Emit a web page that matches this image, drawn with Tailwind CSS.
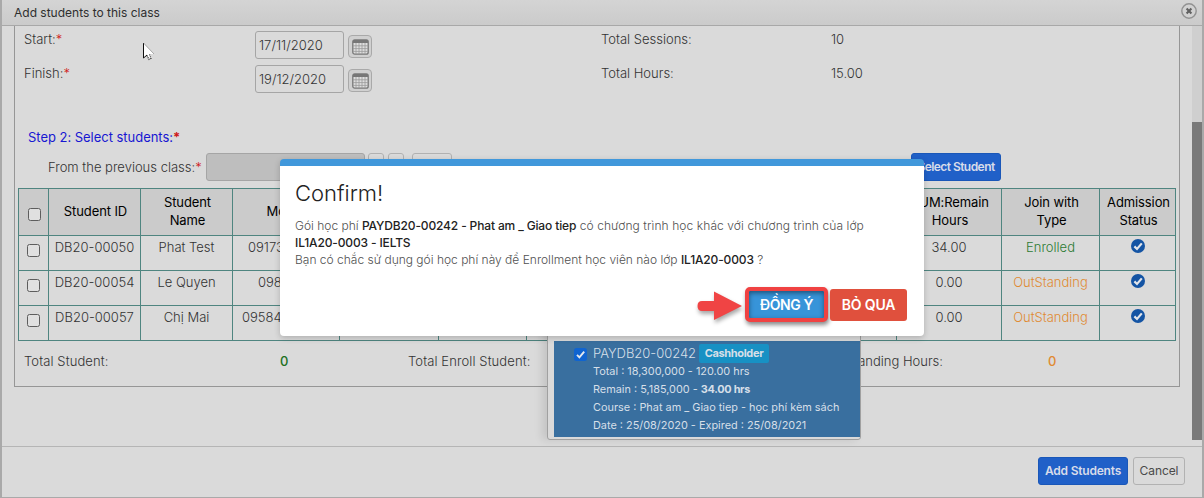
<!DOCTYPE html>
<html lang="vi">
<head>
<meta charset="utf-8">
<title>Add students to this class</title>
<script src="https://cdn.jsdelivr.net/npm/@tailwindcss/browser@4"></script>
</head>
<body class="relative h-[498px] w-[1204px] overflow-hidden bg-[#a9a9a9] pl-[2px] pr-[2px] pb-px font-[Inter,sans-serif] text-[13px] leading-[18px] font-light text-[#333]">
<div class="flex h-[497px] w-[1200px] flex-col bg-[#dadada]">
  <header class="flex h-[26px] shrink-0 items-center justify-between border-b border-[#a8a8a8] bg-gradient-to-b from-[#d4d4d4] to-[#cbcbcb] pr-[4px] pl-[12px]">
    <h1 class="text-[12px] font-normal text-[#2e2e2e]">Add students to this class</h1>
    <svg class="-mt-[3px] h-[18px] w-[18px]" viewBox="0 0 18 18"><circle cx="9" cy="9" r="7.2" fill="#d2d2d2" stroke="#929292" stroke-width="1.4"/><path d="M6.6 6.6l4.8 4.8M11.4 6.6l-4.8 4.8" stroke="#606060" stroke-width="2.1"/></svg>
  </header>

  <main class="flex h-[414px] shrink-0 justify-between pl-[12px]">
    <section class="h-[361px] w-[1166px] border-x border-b border-[#969696]">
      <div class="flex h-[96px] pl-[9px]">
        <div class="w-[231px] pt-[4px]">
          <p class="h-[34px]">Start:<span class="text-[#d01818]">*</span></p>
          <p>Finish:<span class="text-[#d01818]">*</span></p>
        </div>
        <div class="flex w-[346px] flex-col gap-[6px] pt-[5px]">
          <div class="flex h-[28px] gap-[4px]">
            <div class="flex w-[89px] items-center rounded-[3px] border border-[#a5a5a5] pl-[3px]">17/11/2020</div>
            <div class="mt-[4px] flex h-[23px] w-[24px] items-center justify-center rounded-[4px] border border-[#a9a9a9] bg-[#d0d0d0]">
              <svg class="h-[16px] w-[17px]" viewBox="0 0 17 16"><rect x=".8" y=".8" width="15.4" height="14.4" rx="2" fill="#dedede" stroke="#777" stroke-width="1.3"/><path d="M1 4V2q0-1 1-1h13q1 0 1 1v2H1z" fill="#777"/><path d="M4 4v11M7 4v11M10 4v11M13 4v11M1 6.800h15M1 9.600h15M1 12.400h15" stroke="#999" stroke-width=".8"/></svg>
            </div>
          </div>
          <div class="flex h-[28px] gap-[4px]">
            <div class="flex w-[89px] items-center rounded-[3px] border border-[#a5a5a5] pl-[3px]">19/12/2020</div>
            <div class="mt-[4px] flex h-[23px] w-[24px] items-center justify-center rounded-[4px] border border-[#a9a9a9] bg-[#d0d0d0]">
              <svg class="h-[16px] w-[17px]" viewBox="0 0 17 16"><rect x=".8" y=".8" width="15.4" height="14.4" rx="2" fill="#dedede" stroke="#777" stroke-width="1.3"/><path d="M1 4V2q0-1 1-1h13q1 0 1 1v2H1z" fill="#777"/><path d="M4 4v11M7 4v11M10 4v11M13 4v11M1 6.800h15M1 9.600h15M1 12.400h15" stroke="#999" stroke-width=".8"/></svg>
            </div>
          </div>
        </div>
        <div class="w-[230px] pt-[4px]"><p class="h-[34px]">Total Sessions:</p><p>Total Hours:</p></div>
        <div class="pt-[4px]"><p class="h-[34px]">10</p><p>15.00</p></div>
      </div>

      <h2 class="mt-[6px] h-[25px] pl-[13px] font-normal tracking-[-0.03px] text-[#1717d2]">Step 2: Select students:<span class="font-bold text-[#d01818]">*</span></h2>

      <div class="flex h-[28px] pl-[33px]">
        <p class="w-[158px] pt-[5px]">From the previous class:<span class="text-[#d01818]">*</span></p>
        <div class="w-[159px] rounded-[3px] border border-[#a5a5a5] bg-[#bebebe]"></div>
        <div class="ml-[3px] w-[16px] rounded-[3px] border border-[#b1b1b1]"></div>
        <div class="ml-[4px] w-[16px] rounded-[3px] border border-[#b1b1b1]"></div>
        <div class="ml-[8px] w-[40px] rounded-[3px] border border-[#b1b1b1]"></div>
        <div class="ml-[459px] flex w-[90px] items-center justify-center rounded-[3px] border border-[#1a57b8] bg-[#2060c8] text-[12px] font-semibold tracking-[-0.55px] text-[#d8dcea]">Select Student</div>
      </div>

      <table class="mt-[7px] ml-[3px] w-[1158px] table-fixed border-collapse text-center">
        <colgroup><col class="w-[30px]"><col class="w-[92px]"><col class="w-[92px]"><col class="w-[107px]"><col class="w-[99px]"><col class="w-[88px]"><col class="w-[370px]"><col class="w-[105px]"><col class="w-[98px]"><col class="w-[76px]"></colgroup>
        <thead>
          <tr class="h-[47px] bg-[#cbcbcb] tracking-[-0.1px] text-black [&>th]:border [&>th]:border-[#4f8580] [&>th]:p-0 [&>th]:pb-[2px] [&>th]:pl-[2px] [&>th]:font-normal">
            <th><div class="mx-auto mt-[7px] h-[13px] w-[13px] rounded-[2.5px] border border-[#5d5d5d] bg-[#e0e0e0]"></div></th>
            <th>Student ID</th><th>Student<br>Name</th><th>Mobile</th><th></th><th></th><th></th><th>SUM:Remain<br>Hours</th><th>Join with<br>Type</th><th>Admission<br>Status</th>
          </tr>
        </thead>
        <tbody class="[&_td]:border [&_td]:border-[#4f8580] [&_td]:p-0 [&_td]:pt-[2px] [&_td]:align-top">
          <tr class="h-[35px]">
            <td><div class="mx-auto mt-[6px] h-[13px] w-[13px] rounded-[2.5px] border border-[#5d5d5d] bg-[#e0e0e0]"></div></td>
            <td>DB20-00050</td><td>Phat Test</td><td class="text-left"><span class="pl-[15px]">09173</span></td><td></td><td></td><td></td><td>34.00</td><td class="text-[#2d7a33]">Enrolled</td>
            <td><svg class="mx-auto mt-px h-[14px] w-[14px]" viewBox="0 0 14 14"><circle cx="7" cy="7" r="7" fill="#1454a4"/><path d="M3.4 7.4l2.6 2.6 4.8-5.6" fill="none" stroke="#e2e5ea" stroke-width="2.2"/></svg></td>
          </tr>
          <tr class="h-[35px]">
            <td><div class="mx-auto mt-[6px] h-[13px] w-[13px] rounded-[2.5px] border border-[#5d5d5d] bg-[#e0e0e0]"></div></td>
            <td>DB20-00054</td><td>Le Quyen</td><td class="text-left"><span class="pl-[25px]">098</span></td><td></td><td></td><td></td><td>0.00</td><td class="text-[#e08a32]">OutStanding</td>
            <td><svg class="mx-auto mt-px h-[14px] w-[14px]" viewBox="0 0 14 14"><circle cx="7" cy="7" r="7" fill="#1454a4"/><path d="M3.4 7.4l2.6 2.6 4.8-5.6" fill="none" stroke="#e2e5ea" stroke-width="2.2"/></svg></td>
          </tr>
          <tr class="h-[35px]">
            <td><div class="mx-auto mt-[6px] h-[13px] w-[13px] rounded-[2.5px] border border-[#5d5d5d] bg-[#e0e0e0]"></div></td>
            <td>DB20-00057</td><td>Chị Mai</td><td class="text-left"><span class="pl-[9px]">09584</span></td><td></td><td></td><td></td><td>0.00</td><td class="text-[#e08a32]">OutStanding</td>
            <td><svg class="mx-auto mt-px h-[14px] w-[14px]" viewBox="0 0 14 14"><circle cx="7" cy="7" r="7" fill="#1454a4"/><path d="M3.4 7.4l2.6 2.6 4.8-5.6" fill="none" stroke="#e2e5ea" stroke-width="2.2"/></svg></td>
          </tr>
        </tbody>
      </table>

      <div class="mt-[11px] flex pl-[9px]">
        <p class="w-[256px] tracking-[0.1px]">Total Student:</p>
        <p class="w-[128px] font-medium text-[#217021]">0</p>
        <p class="w-[300px] tracking-[0.1px]">Total Enroll Student:</p>
        <p class="w-[235px] text-right">Total OutStanding Hours:</p>
        <p class="pl-[105px] font-medium text-[#e08a32]">0</p>
      </div>
    </section>
    <div class="h-full w-[10px] bg-[#cfcfcf] pt-[96px]"><div class="h-[318px] bg-[#797979]"></div></div>
  </main>

  <footer class="mt-[6px] flex h-[51px] justify-end gap-[5px] border-t border-[#b5b5b5] pt-[10px] pr-[17px]">
    <div class="flex h-[28px] w-[90px] items-center justify-center rounded-[3px] border border-[#1a57b8] bg-[#2060c8] text-[12px] font-semibold tracking-[-0.2px] text-[#d8dcea]">Add Students</div>
    <div class="flex h-[28px] w-[52px] items-center justify-center rounded-[3px] border border-[#b2b2b2] text-[12px] font-normal tracking-[-0.1px] text-[#4a4a4a]">Cancel</div>
  </footer>
</div>

<!-- Payment package popup -->
<div class="absolute top-[300px] left-[547px] h-[140px] w-[314px] rounded-b-[3px] border border-[#a0a0a0] bg-[#dadada] pt-[40px] pl-[6px] shadow-[-5px_0_8px_rgba(0,0,0,0.1)]">
  <div class="flex h-[96px] gap-[6px] bg-[#396f9f] pl-[20px] text-[10.9px] leading-[18px] font-normal text-[#d6dfe8]">
    <svg class="mt-[7px] h-[13px] w-[13px]" viewBox="0 0 13 13"><rect width="13" height="13" rx="2.5" fill="#1064d0"/><path d="M3 6.8l2.4 2.5L10.2 3.6" fill="none" stroke="#e4e8ee" stroke-width="1.9"/></svg>
    <div class="whitespace-nowrap">
      <div class="flex h-[21px] items-center gap-[2px] pt-[3px]"><span class="-mt-px w-[104px] text-[13px] font-light tracking-[-0.02px]">PAYDB20-00242</span><span class="flex h-[19px] w-[70px] items-center justify-center rounded-[2px] bg-[#1791c4] text-[11px] font-bold tracking-[-0.35px]">Cashholder</span></div>
      <p>Total : 18,300,000 - 120.00 hrs</p>
      <p>Remain : 5,185,000 - <b class="font-bold tracking-[-0.3px]">34.00 hrs</b></p>
      <p>Course : Phat am _ Giao tiep - học phí kèm sách</p>
      <p>Date : 25/08/2020 - Expired : 25/08/2021</p>
    </div>
  </div>
</div>

<!-- Confirmation dialog -->
<div class="absolute top-[159px] left-[280px] h-[177px] w-[644px] overflow-hidden rounded-[4px] border-t-[7px] border-[#4198db] bg-white px-[15px] shadow-[0_2px_6px_rgba(0,0,0,0.2)]">
  <h3 class="pt-[12px] text-[22px] leading-[30px] font-light text-[#222]">Confirm!</h3>
  <div class="mt-[9px] text-[12px] leading-[17px] whitespace-nowrap text-[#505050] [&_b]:font-medium [&_b]:tracking-[-0.14px] [&_b]:text-[#222]">
    <p>Gói học phí <b>PAYDB20-00242 - Phat am _ Giao tiep</b><span class="tracking-[0.09px]"> có chương trình học khác với chương trình của lớp</span></p>
    <p><b>IL1A20-0003 - IELTS</b></p>
    <p>Bạn có chắc sử dụng gói học phí này để Enrollment học viên nào lớp <b>IL1A20-0003</b> ?</p>
  </div>
  <div class="mt-[19px] flex items-start justify-end gap-[2px] pr-[2px] text-[14px] font-semibold text-white">
    <svg class="-mr-px h-[36px] w-[48px] drop-shadow-[1px_3px_2px_rgba(0,0,0,0.35)]" viewBox="0 0 48 36"><path d="M6 14H18V4.5L46 19L18 33V24H6Q1.500 24 1.500 19Q1.500 14 6 14Z" fill="#f04444"/></svg>
    <div class="flex h-[35px] w-[83px] items-center justify-center rounded-[5px] border-4 border-[#f04242] bg-[#3794d9] tracking-[-0.4px] shadow-[1px_3px_4px_rgba(0,0,0,0.45),inset_0_2px_5px_rgba(0,0,0,0.45)]">ĐỒNG Ý</div>
    <div class="mt-[2px] flex h-[32px] w-[77px] items-center justify-center rounded-[3px] bg-[#e0503d] tracking-[-0.15px]">BỎ QUA</div>
  </div>
</div>

<!-- Mouse pointer -->
<svg class="absolute top-[42px] left-[142px] h-[20px] w-[14px]" viewBox="0 0 14 20"><path d="M1.500 1v15l3.500-3 2 3.500 2-1-1.500-3.500H12z" fill="#fff"/><path d="M1.500 1v15l3.500-3" fill="none" stroke="#111" stroke-width="1"/><path d="M1.500 1l10.500 11" stroke="#777" stroke-width=".6"/><path d="M5 13.500l2 4 2-1-1.500-4" fill="none" stroke="#222" stroke-width="1.100" stroke-dasharray="1 1"/></svg>
</body>
</html>
